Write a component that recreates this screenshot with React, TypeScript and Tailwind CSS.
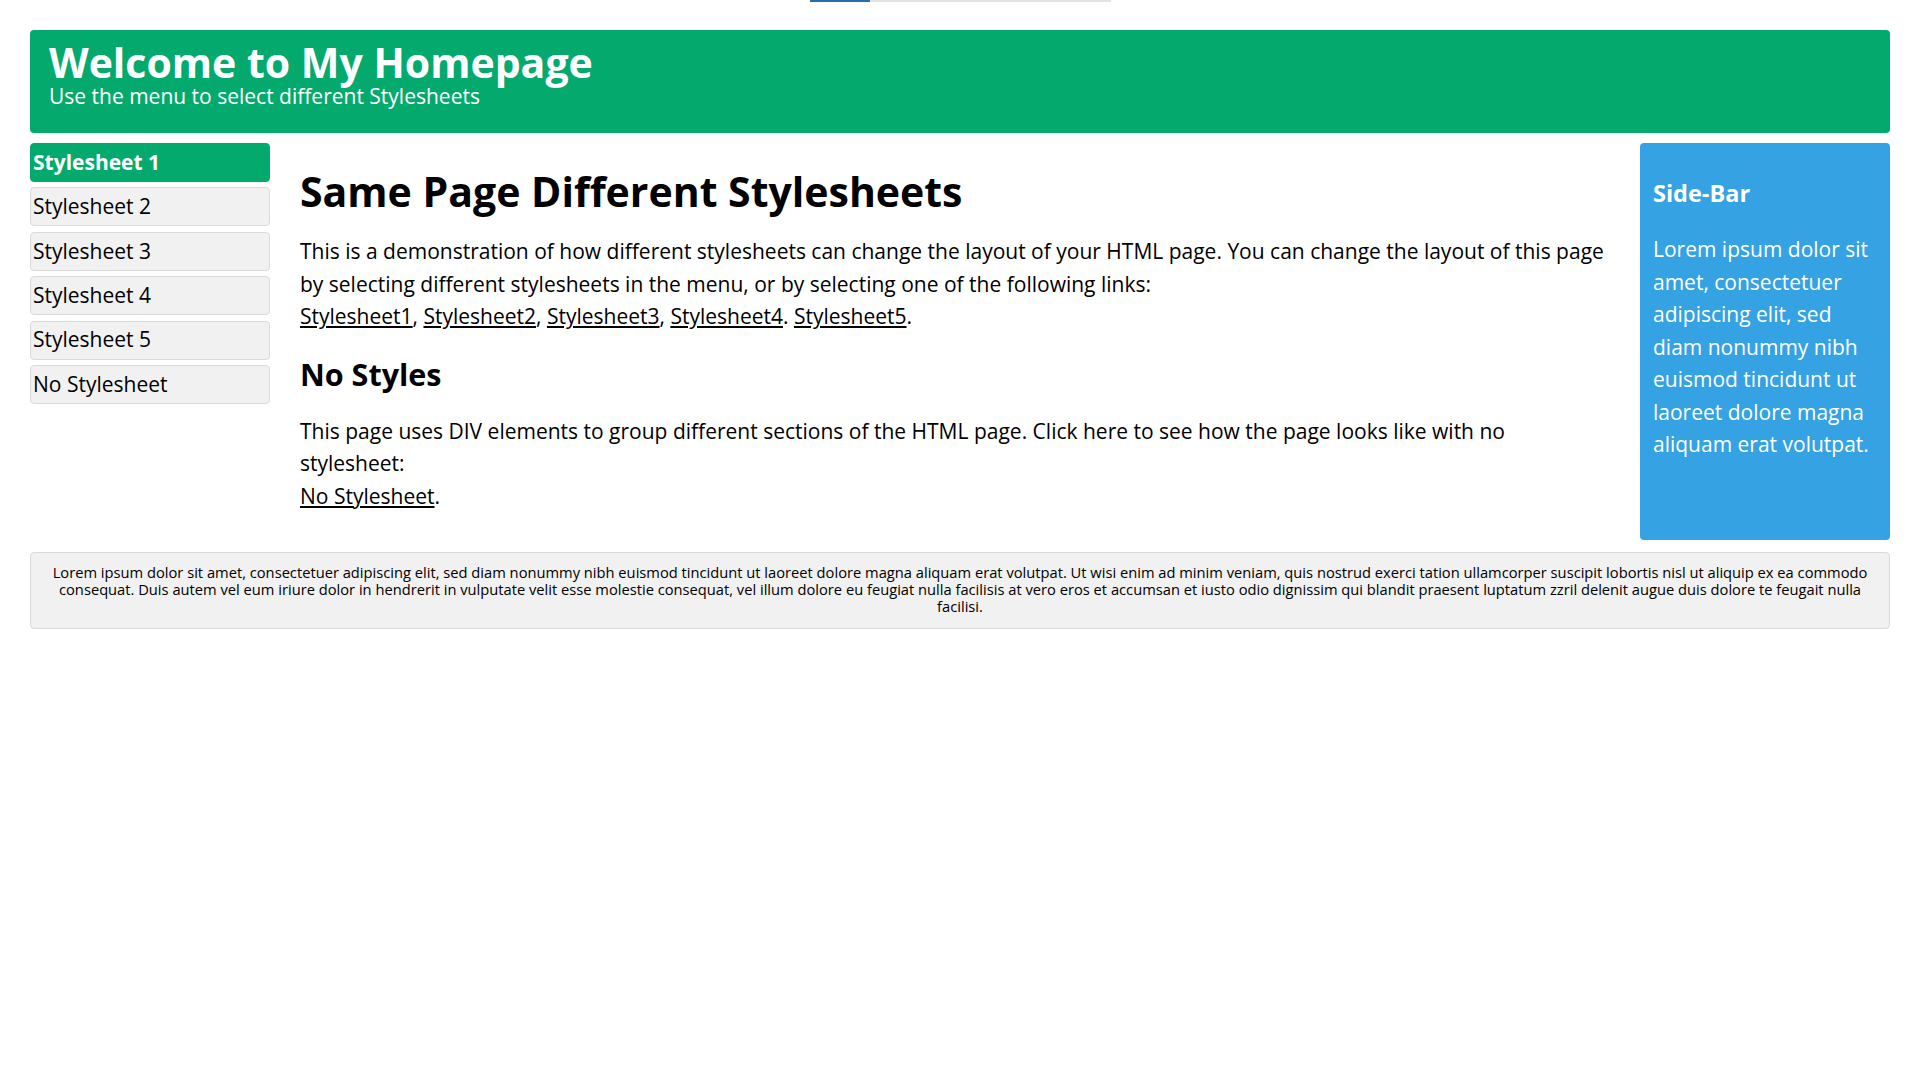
import React from "react";

const menuItems = [
  "Stylesheet 1",
  "Stylesheet 2",
  "Stylesheet 3",
  "Stylesheet 4",
  "Stylesheet 5",
  "No Stylesheet",
];

const links = ["Stylesheet1", "Stylesheet2", "Stylesheet3", "Stylesheet4", "Stylesheet5"];

const footerText =
  "Lorem ipsum dolor sit amet, consectetuer adipiscing elit, sed diam nonummy nibh euismod tincidunt ut laoreet dolore magna aliquam erat volutpat. Ut wisi enim ad minim veniam, quis nostrud exerci tation ullamcorper suscipit lobortis nisl ut aliquip ex ea commodo consequat. Duis autem vel eum iriure dolor in hendrerit in vulputate velit esse molestie consequat, vel illum dolore eu feugiat nulla facilisis at vero eros et accumsan et iusto odio dignissim qui blandit praesent luptatum zzril delenit augue duis dolore te feugait nulla facilisi.";

const App = () => {
  return (
    <div className="min-h-screen bg-white text-black font-['Open_Sans',sans-serif]">
      {/* loading strip at the very top */}
      <div className="flex h-[2px] justify-center">
        <div className="flex w-[301px] bg-[#e3e3e3]">
          <div className="w-[60px] bg-[#2b6db3]" />
        </div>
      </div>

      <header className="mx-[30px] mt-[28px] h-[103px] rounded-[4px] bg-[#04AA6D] px-[19px] pt-[11px] text-white">
        <h1 className="text-[41px] font-bold leading-[42px]">Welcome to My Homepage</h1>
        <p className="mt-[2px] text-[21px] leading-[22px]">Use the menu to select different Stylesheets</p>
      </header>

      <div className="mx-[30px] mt-[10px] flex items-start">
        <nav className="flex w-[240px] flex-col gap-[5.4px]">
          {menuItems.map((item, i) => (
            <a
              key={item}
              href="#"
              className={
                i === 0
                  ? "flex h-[39px] items-center rounded-[4px] border border-[#04AA6D] bg-[#04AA6D] pl-[2px] text-[21px] font-bold text-white"
                  : "flex h-[39px] items-center rounded-[4px] border border-[#dadada] bg-[#f1f1f1] pl-[2px] text-[21px] text-black"
              }
            >
              {item}
            </a>
          ))}
        </nav>

        <main className="flex-1 px-[30px] pt-[24px]">
          <h1 className="text-[41px] font-bold leading-[48px]">Same Page Different Stylesheets</h1>
          <p className="mt-[20px] text-[21px] leading-[32.5px]">
            This is a demonstration of how different stylesheets can change the layout of your HTML page. You can
            change the layout of this page by selecting different stylesheets in the menu, or by selecting one of the
            following links:
            <br />
            {links.map((l, i) => (
              <React.Fragment key={l}>
                <a href="#" className="underline">
                  {l}
                </a>
                {i < 3 ? ", " : i === 3 ? ". " : "."}
              </React.Fragment>
            ))}
          </p>
          <h2 className="mt-[23px] text-[30.5px] font-bold leading-[36px]">No Styles</h2>
          <p className="mt-[23px] text-[21px] leading-[32.5px]">
            This page uses DIV elements to group different sections of the HTML page. Click here to see how the page
            looks like with no stylesheet:
            <br />
            <a href="#" className="underline">
              No Stylesheet
            </a>
            .
          </p>
        </main>

        <aside className="h-[397px] w-[250px] rounded-[4px] bg-[#34a2e3] px-[13px] pt-[36px] text-white">
          <h3 className="text-[23.5px] font-bold leading-[28px]">Side-Bar</h3>
          <p className="mt-[26px] text-[21px] leading-[32.5px]">
            Lorem ipsum dolor sit amet, consectetuer adipiscing elit, sed diam nonummy nibh euismod tincidunt ut
            laoreet dolore magna aliquam erat volutpat.
          </p>
        </aside>
      </div>

      <footer className="mx-[30px] mt-[12px] h-[77px] rounded-[4px] border border-[#d9d9d9] bg-[#f1f1f1] px-[16px] pt-[11px] text-center text-[14.7px] leading-[17px]">
        {footerText}
      </footer>
    </div>
  );
};

export default App;
